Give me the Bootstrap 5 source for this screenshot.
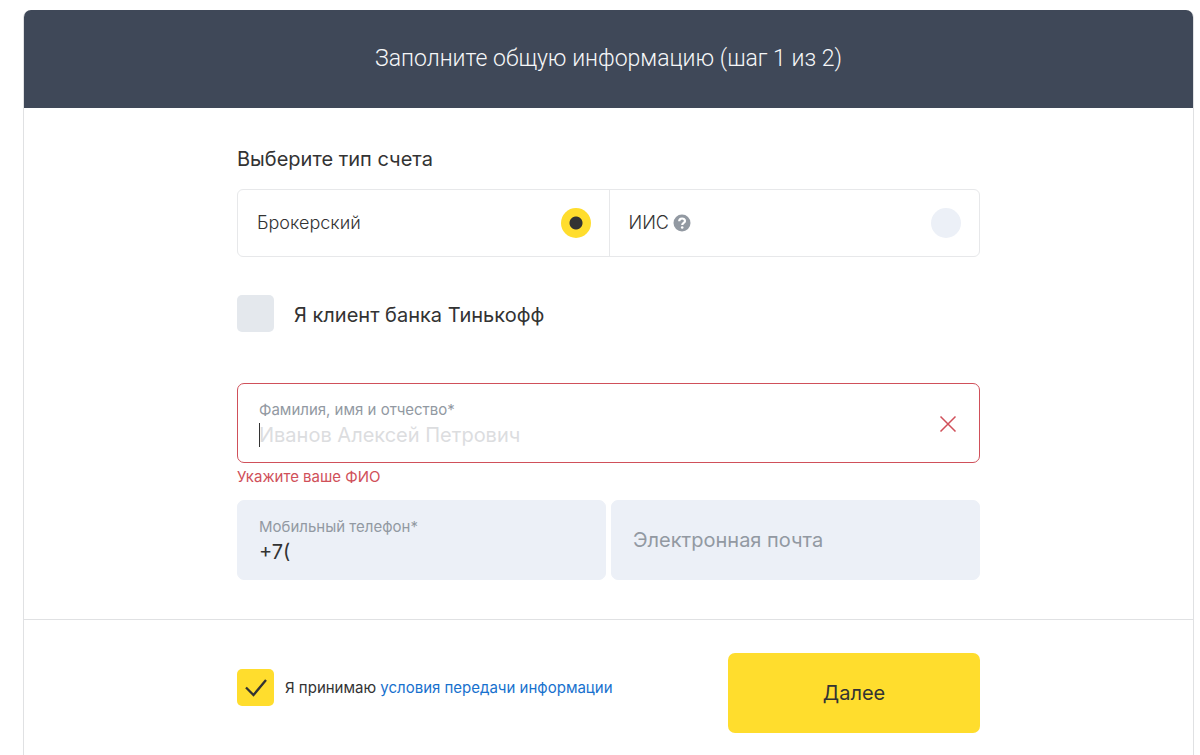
<!DOCTYPE html>
<html lang="ru">
<head>
<meta charset="utf-8">
<meta name="viewport" content="width=device-width, initial-scale=1">
<title>Заполните общую информацию</title>
<link href="https://cdn.jsdelivr.net/npm/bootstrap@5.3.0/dist/css/bootstrap.min.css" rel="stylesheet">
<style>
  :root { --ink: #333; --muted: #9299a2; --field: #ecf0f7; --accent: #ffdd2d; --danger: #d0505a; --line: #e0e1e3; }
  body { font-family: Inter, "Liberation Sans", sans-serif; font-size: 20px; line-height: 24px; color: var(--ink); padding: 10px 6px 0 23px; }
  .form-card { border: 1px solid var(--line); border-width: 0 1px; border-radius: 8px 8px 0 0; }
  .form-head { background: #3f4858; color: #f6f7f8; padding: 34px 16px; border-radius: 7px 7px 0 0; }
  .form-head h1 { font-family: Roboto, "Open Sans", sans-serif; font-size: 23px; line-height: 30px; font-weight: 300; }
  .form-inner { max-width: 743px; width: 100%; margin: 0 auto; }
  .form-main { padding: 39px 0; }
  .form-foot { border-top: 1px solid var(--line); padding: 33px 0 22px; }
  legend { font-size: 20px; line-height: 24px; margin-bottom: 18px; }
  .kinds { border: 1px solid #e7e8ea; border-radius: 6px; }
  .kind { padding: 18px 18px 18px 19px; font-size: 18px; line-height: 30px; font-weight: 300; }
  .kind + .kind { border-left: 1px solid #e7e8ea; }
  .kind .form-check-input { width: 30px; height: 30px; border: 0; background-color: var(--field); }
  .kind .form-check-input:checked { background: radial-gradient(circle, var(--ink) 0 6px, var(--accent) 7px); }
  .client { gap: 20px; padding: 38px 0 51px; }
  .client label { padding-top: 3px; }
  .tick { width: 37px; height: 37px; border: 0; border-radius: 5px !important; background-color: #e4e8ed; flex: none; }
  .tick:checked { background-color: var(--accent); background-size: 37px 37px;
    background-image: url("data:image/svg+xml,%3Csvg xmlns='http://www.w3.org/2000/svg' viewBox='0 0 37 37'%3E%3Cpath d='M9 18.500l7.500 7.500L29 11' fill='none' stroke='%23333' stroke-width='2.300'/%3E%3C/svg%3E"); }
  .field { background: var(--field); border: 1px solid var(--field); border-radius: 7px; height: 80px; padding: 0 21px; }
  .field label { display: block; padding-top: 4px; font-size: 15px; line-height: 20px; color: var(--muted); }
  .field input { display: block; width: 100%; border: 0; padding: 0; outline: 0; background: none; color: var(--ink); line-height: 26px; height: 30px; }
  .field input::placeholder { color: var(--muted); opacity: 1; }
  .field-invalid { background: #fff; border-color: var(--danger); }
  .field-invalid input::placeholder { color: #dcdddf; }
  .caret { position: absolute; left: 0; top: 3px; width: 1px; height: 24px; background: var(--ink); }
  .clear { border: 0; background: none; padding: 0; line-height: 0; margin-right: 1px; }
  .error { font-size: 15px; line-height: 20px; color: var(--danger); padding: 4px 0 13px; }
  .pair { gap: 5px; }
  .terms { gap: 11px; font-size: 15px; line-height: 20px; }
  .terms a { color: #1771ce; text-decoration: none; }
  .next { --bs-btn-bg: #ffdd2d; --bs-btn-color: #333; --bs-btn-hover-bg: #fcc521; width: 252px; height: 80px; font-size: 20px; border: 0; border-radius: 7px; }
</style>
</head>
<body class="min-vh-100 d-flex flex-column">
<form class="form-card flex-grow-1">
  <header class="form-head text-center"><h1 class="m-0">Заполните общую информацию (шаг 1 из 2)</h1></header>
  <div class="form-main">
    <div class="form-inner">
      <fieldset>
        <legend>Выберите тип счета</legend>
        <div class="kinds row g-0">
          <div class="kind col-6 d-flex align-items-center justify-content-between">
            <label for="broker">Брокерский</label>
            <input class="form-check-input m-0" type="radio" name="kind" id="broker" checked>
          </div>
          <div class="kind col-6 d-flex align-items-center justify-content-between">
            <label for="iis" class="d-flex align-items-center gap-1">ИИС
              <svg width="18" height="18" viewBox="0 0 18 18" aria-hidden="true"><circle cx="9" cy="9" r="8.5" fill="#9299a2"/><path d="M6.2 7.2C6.2 3.6 12 3.7 12 7c0 1.9-2.800 1.900-2.800 4" fill="none" stroke="#fff" stroke-width="2.200"/><circle cx="9.200" cy="13.500" r="1.300" fill="#fff"/></svg>
            </label>
            <input class="form-check-input m-0" type="radio" name="kind" id="iis">
          </div>
        </div>
      </fieldset>
      <div class="client d-flex align-items-center">
        <input class="form-check-input tick m-0" type="checkbox" id="client">
        <label for="client">Я клиент банка Тинькофф</label>
      </div>
      <div class="field field-invalid d-flex align-items-center">
        <div class="flex-grow-1">
          <label for="fio">Фамилия, имя и отчество*</label>
          <div class="position-relative"><input id="fio" type="text" placeholder="Иванов Алексей Петрович"><span class="caret"></span></div>
        </div>
        <button type="button" class="clear" aria-label="Очистить"><svg width="18" height="18" viewBox="0 0 18 18"><path d="M1.500 2.500l15 15M16.500 2.500l-15 15" stroke="#d0505a" stroke-width="1.500"/></svg></button>
      </div>
      <div class="error">Укажите ваше ФИО</div>
      <div class="pair d-flex">
        <div class="field flex-fill w-50 d-flex flex-column justify-content-center">
          <label for="phone">Мобильный телефон*</label>
          <input id="phone" type="tel" value="+7(">
        </div>
        <div class="field flex-fill w-50 d-flex align-items-center">
          <input id="mail" type="email" placeholder="Электронная почта" aria-label="Электронная почта">
        </div>
      </div>
    </div>
  </div>
  <div class="form-foot">
    <div class="form-inner d-flex align-items-start justify-content-between">
      <div class="terms d-flex align-items-center mt-3">
        <input class="form-check-input tick m-0" type="checkbox" id="terms" checked>
        <label for="terms">Я принимаю <a href="#">условия передачи информации</a></label>
      </div>
      <button type="submit" class="btn next">Далее</button>
    </div>
  </div>
</form>
<script src="https://cdn.jsdelivr.net/npm/bootstrap@5.3.0/dist/js/bootstrap.bundle.min.js"></script>
</body>
</html>
